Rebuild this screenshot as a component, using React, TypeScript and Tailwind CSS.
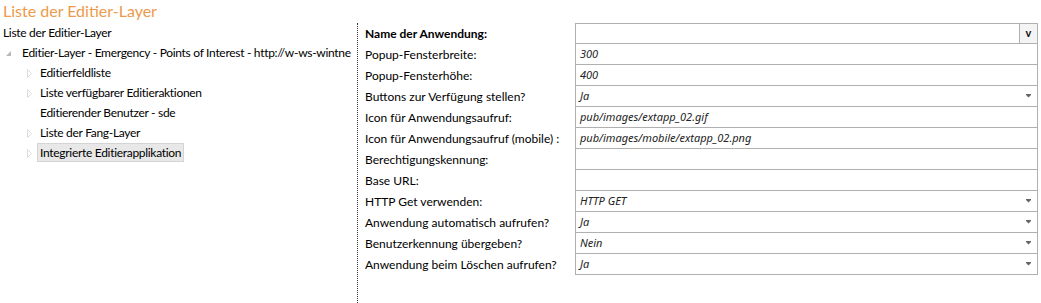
import React from "react";

const font = { fontFamily: 'Lato, "Noto Sans", sans-serif' };
const valueFont = { fontFamily: '"Noto Sans", "Open Sans", sans-serif' };

function Caret() {
  return (
    <svg width="5" height="4" viewBox="0 0 5 4" className="shrink-0">
      <rect x="0" y="0" width="5" height="1" fill="#666" />
      <path d="M0 1 L5 1 L2.5 3.6 Z" fill="#666" />
    </svg>
  );
}

function ExpandedArrow() {
  return (
    <svg width="5" height="5" viewBox="0 0 5 5">
      <path d="M5 0 L5 5 L0 5 Z" fill="#b8b8b8" />
    </svg>
  );
}

function CollapsedArrow() {
  return (
    <svg width="5" height="9" viewBox="0 0 5 9">
      <path d="M0.5 0.5 L4.5 4.5 L0.5 8.5 Z" fill="none" stroke="#dcdcdc" strokeWidth="1" />
    </svg>
  );
}

type Row = { label: string; value: string; kind: "name" | "text" | "select"; bold?: boolean };

const rows: Row[] = [
  { label: "Name der Anwendung:", value: "", kind: "name", bold: true },
  { label: "Popup-Fensterbreite:", value: "300", kind: "text" },
  { label: "Popup-Fensterhöhe:", value: "400", kind: "text" },
  { label: "Buttons zur Verfügung stellen?", value: "Ja", kind: "select" },
  { label: "Icon für Anwendungsaufruf:", value: "pub/images/extapp_02.gif", kind: "text" },
  { label: "Icon für Anwendungsaufruf (mobile) :", value: "pub/images/mobile/extapp_02.png", kind: "text" },
  { label: "Berechtigungskennung:", value: "", kind: "text" },
  { label: "Base URL:", value: "", kind: "text" },
  { label: "HTTP Get verwenden:", value: "HTTP GET", kind: "select" },
  { label: "Anwendung automatisch aufrufen?", value: "Ja", kind: "select" },
  { label: "Benutzerkennung übergeben?", value: "Nein", kind: "select" },
  { label: "Anwendung beim Löschen aufrufen?", value: "Ja", kind: "select" },
];

const children = [
  { label: "Editierfeldliste", arrow: true },
  { label: "Liste verfügbarer Editieraktionen", arrow: true },
  { label: "Editierender Benutzer - sde", arrow: false },
  { label: "Liste der Fang-Layer", arrow: true },
  { label: "Integrierte Editierapplikation", arrow: true, selected: true },
];

export default function App() {
  return (
    <div className="w-[1041px] h-[303px] bg-white overflow-hidden text-[#000]" style={font}>
      <div className="h-[23px] pl-[3px] text-[16px] leading-[21px] text-[#ec9a4c] whitespace-nowrap">
        Liste der Editier-Layer
      </div>
      <div className="flex h-[280px]">
        <div className="w-[357px] shrink-0 text-[12px] tracking-[-0.3px] overflow-hidden">
          <div className="h-[20px] flex items-center pl-[3px]">Liste der Editier-Layer</div>
          <div className="h-[20px] flex items-center">
            <div className="w-[22px] shrink-0 pl-[6px] flex items-center">
              <ExpandedArrow />
            </div>
            <span className="whitespace-nowrap">Editier-Layer - Emergency - Points of Interest - http://w-ws-wintne</span>
          </div>
          {children.map((c) => (
            <div key={c.label} className="h-[20px] flex items-center">
              <div className="w-[37px] shrink-0 pl-[27px] flex items-center">{c.arrow && <CollapsedArrow />}</div>
              <span
                className={
                  c.selected
                    ? "h-[19px] flex items-center px-[2px] bg-[#e8e8e8] border border-[#d4d4d4] -mt-[1px] whitespace-nowrap"
                    : "px-[3px] whitespace-nowrap"
                }
              >
                {c.label}
              </span>
            </div>
          ))}
        </div>
        <div className="w-0 border-l border-dotted border-[#333] h-full" />
        <div className="pl-[7px] text-[12px]">
          {rows.map((r, i) => (
            <div key={r.label} className="flex h-[21px]">
              <div className={"w-[210px] shrink-0 whitespace-nowrap flex items-center " + (r.bold ? "font-bold" : "")}>
                {r.label}
              </div>
              <div
                className={
                  "w-[463px] shrink-0 flex items-center border-x border-b border-[#b0b0b0] " + (i === 0 ? "border-t" : "")
                }
              >
                {r.kind === "name" ? (
                  <>
                    <div className="flex-1 h-full" />
                    <div className="w-[18px] h-full border-l border-[#b0b0b0] bg-[#f4f4f4] flex items-center justify-center font-bold text-[11px] text-[#111]">
                      v
                    </div>
                  </>
                ) : (
                  <>
                    <span className="flex-1 pl-[4px] italic text-[11px] text-[#222]" style={valueFont}>
                      {r.value}
                    </span>
                    {r.kind === "select" && (
                      <div className="pr-[6px] flex items-center">
                        <Caret />
                      </div>
                    )}
                  </>
                )}
              </div>
            </div>
          ))}
        </div>
      </div>
    </div>
  );
}
